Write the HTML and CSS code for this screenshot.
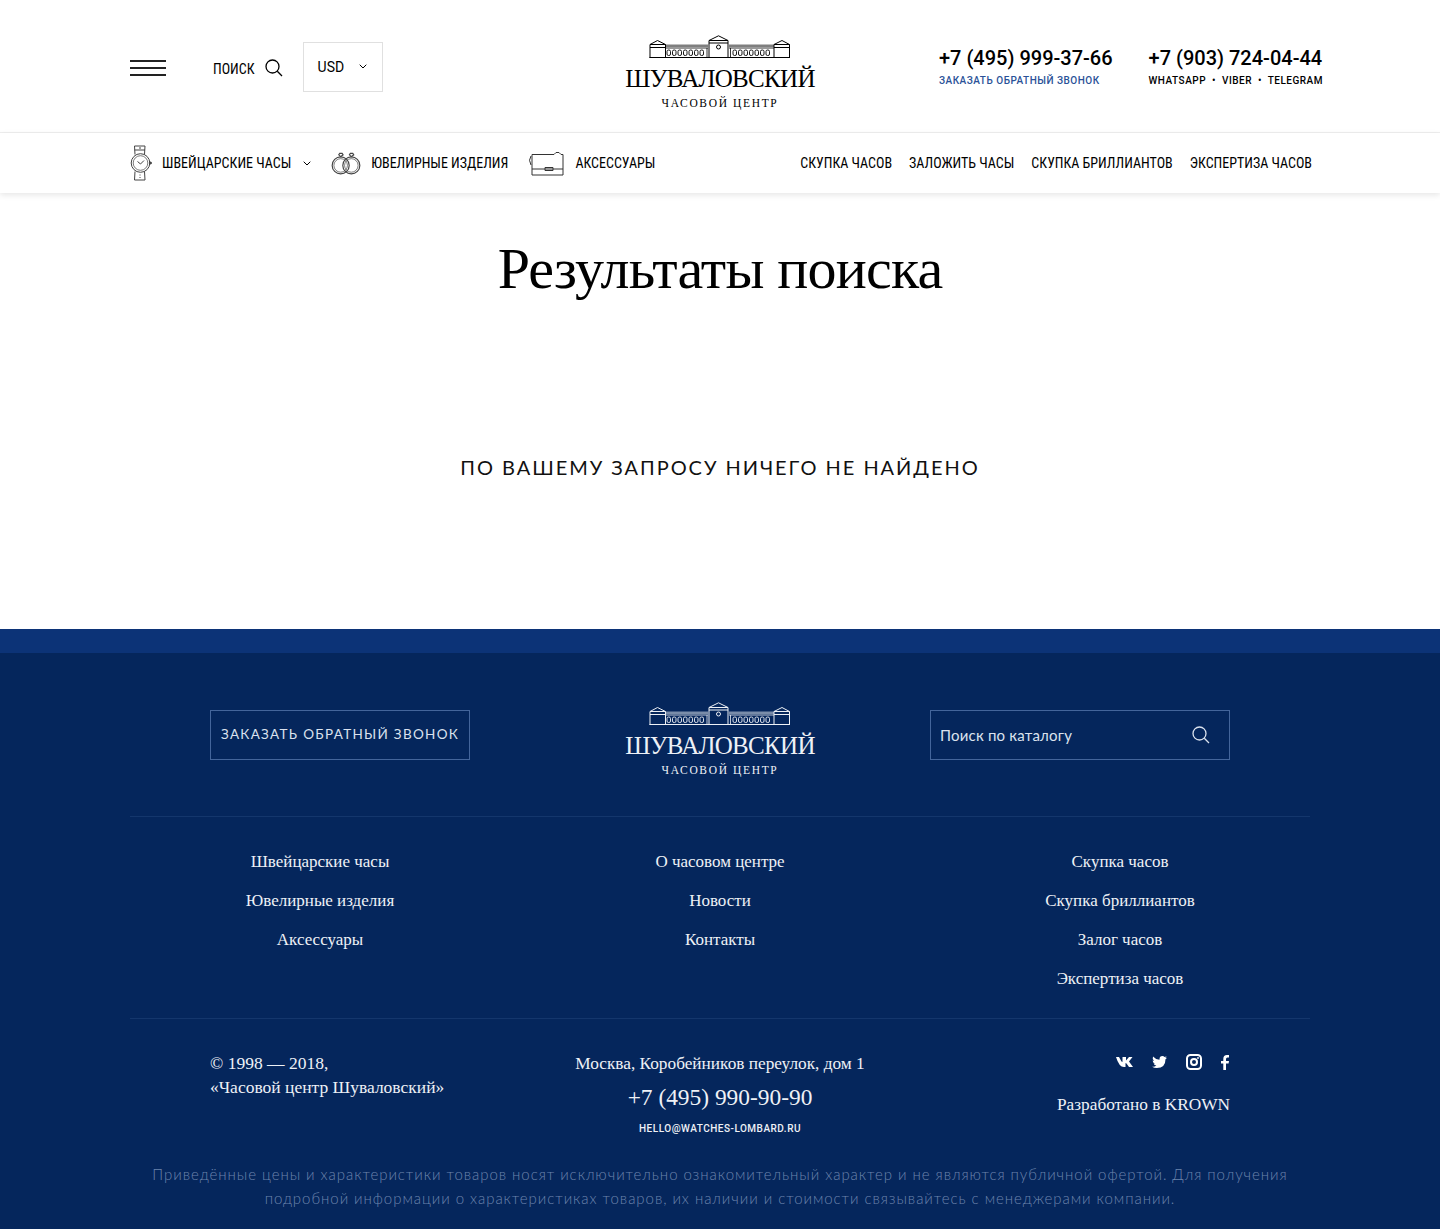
FILE: index.html
```html
<!DOCTYPE html>
<html lang="en">
<head>
    <meta charset="UTF-8">
    <title>Результаты поиска</title>
    <link rel="stylesheet" href="styles.css">
</head>
<body>
    <svg class="sprite" width="0" height="0">
        <symbol id="building" viewBox="0 0 142 24">
            <g fill="none" stroke="currentColor" stroke-width="1">
                <path d="M1 23V9.500L8.500 5.500 16.500 9.500V23M1 9.500H16.500M1 12.500H16.500"/>
                <path d="M60 23V5.500L69.500 .8 79 5.500V23M60 5.500H79M60 8H79"/>
                <path d="M125 23V9.500L133 5.500 140.500 9.500V23M125 9.500H140.500M125 12.500H140.500"/>
                <path d="M.5 22.500H141"/>
                <path d="M16.500 10.800H59M80 10.800H125" stroke-width="2.400" opacity=".5"/>
                <path d="M16.500 13H59M80 13H125" stroke-width=".8"/>
                <path d="M58 13V23M81.500 13V23" stroke-width=".8"/>
                <circle cx="69.500" cy="12" r="2"/>
                <g stroke-width=".9">
                    <rect x="18" y="15" width="3.500" height="5.500" rx="1.500"/><rect x="23.500" y="15" width="3.500" height="5.500" rx="1.500"/><rect x="29" y="15" width="3.500" height="5.500" rx="1.500"/><rect x="34.500" y="15" width="3.500" height="5.500" rx="1.500"/><rect x="40" y="15" width="3.500" height="5.500" rx="1.500"/><rect x="45.500" y="15" width="3.500" height="5.500" rx="1.500"/><rect x="51" y="15" width="3.500" height="5.500" rx="1.500"/>
                    <rect x="84" y="15" width="3.500" height="5.500" rx="1.500"/><rect x="89.500" y="15" width="3.500" height="5.500" rx="1.500"/><rect x="95" y="15" width="3.500" height="5.500" rx="1.500"/><rect x="100.500" y="15" width="3.500" height="5.500" rx="1.500"/><rect x="106" y="15" width="3.500" height="5.500" rx="1.500"/><rect x="111.500" y="15" width="3.500" height="5.500" rx="1.500"/><rect x="117" y="15" width="3.500" height="5.500" rx="1.500"/>
                </g>
            </g>
        </symbol>
        <symbol id="search" viewBox="0 0 18 18">
            <circle cx="7.500" cy="7.500" r="6.500" fill="none" stroke="currentColor" stroke-width="1.300"/>
            <path d="M12.300 12.300L17 17" fill="none" stroke="currentColor" stroke-width="1.300"/>
        </symbol>
        <symbol id="chevron" viewBox="0 0 8 5">
            <path d="M.7.7L4 4 7.300.7" fill="none" stroke="currentColor" stroke-width="1"/>
        </symbol>
    </svg>

    <header class="top">
        <div class="top-inner">
            <div class="top-left">
                <div class="burger"><span></span><span></span><span></span></div>
                <div class="search-link">
                    <span class="search-text">ПОИСК</span>
                    <svg class="search-icon"><use href="#search"/></svg>
                </div>
                <div class="currency">
                    <span>USD</span>
                    <svg class="chevron"><use href="#chevron"/></svg>
                </div>
            </div>
            <div class="logo">
                <svg class="logo-building"><use href="#building"/></svg>
                <div class="logo-name">ШУВАЛОВСКИЙ</div>
                <div class="logo-sub">ЧАСОВОЙ ЦЕНТР</div>
            </div>
            <div class="phones">
                <div class="phone">
                    <div class="phone-num">+7 (495) 999-37-66</div>
                    <div class="phone-note blue">ЗАКАЗАТЬ ОБРАТНЫЙ ЗВОНОК</div>
                </div>
                <div class="phone">
                    <div class="phone-num">+7 (903) 724-04-44</div>
                    <div class="phone-note">WHATSAPP &nbsp;•&nbsp; VIBER &nbsp;•&nbsp; TELEGRAM</div>
                </div>
            </div>
        </div>
    </header>

    <nav class="nav">
        <div class="nav-inner">
            <div class="nav-left">
                <a class="nav-item nav-watch">
                    <svg class="icon-watch" viewBox="0 0 22 36" fill="none" stroke="#444" stroke-width="1">
                        <path d="M5 9.500L4.500 1H15L14.500 9.500M5 26.500L4.500 35H15L14.500 26.500"/>
                        <path d="M4.600 5H15"/>
                        <circle cx="10.500" cy="18" r="9.300"/>
                        <circle cx="10.500" cy="18" r="7.300" stroke-width=".7"/>
                        <path d="M7.500 16.500L10.500 19 14 15.500"/>
                        <circle cx="20.500" cy="18" r="1" fill="#444"/>
                        <path d="M10 2V4M10 29.500V30.500M10 32V33"/>
                    </svg>
                    <span>ШВЕЙЦАРСКИЕ ЧАСЫ</span>
                    <svg class="chevron nav-chevron"><use href="#chevron"/></svg>
                </a>
                <a class="nav-item nav-rings">
                    <svg class="icon-rings" viewBox="0 0 31 23" fill="none" stroke="#444" stroke-width="1.200">
                        <circle cx="10" cy="13.500" r="8.800"/>
                        <circle cx="10" cy="13.500" r="7" stroke-width=".7"/>
                        <circle cx="21" cy="13.500" r="8.800"/>
                        <circle cx="21" cy="13.500" r="7" stroke-width=".7"/>
                        <path d="M8 2.500L9 1H11.500L12.500 2.500 10 4.500ZM19 2.500L20 1H22.500L23.500 2.500 21 4.500Z"/>
                    </svg>
                    <span>ЮВЕЛИРНЫЕ ИЗДЕЛИЯ</span>
                </a>
                <a class="nav-item nav-bag">
                    <svg class="icon-bag" viewBox="0 0 36 25" fill="none" stroke="#333" stroke-width="1">
                        <path d="M4 3.500H26L28 1.500H31L33 3.500H35V24H4Z"/>
                        <path d="M4 18H35M3 5Q0 9 3 14M17 16.500H25V19.500H17Z"/>
                    </svg>
                    <span>АКСЕССУАРЫ</span>
                </a>
            </div>
            <div class="nav-right">
                <a>СКУПКА ЧАСОВ</a>
                <a>ЗАЛОЖИТЬ ЧАСЫ</a>
                <a>СКУПКА БРИЛЛИАНТОВ</a>
                <a>ЭКСПЕРТИЗА ЧАСОВ</a>
            </div>
        </div>
    </nav>

    <main class="content">
        <h1>Результаты поиска</h1>
        <p class="empty">ПО ВАШЕМУ ЗАПРОСУ НИЧЕГО НЕ НАЙДЕНО</p>
    </main>

    <div class="band"></div>
    <footer class="footer">
        <div class="footer-inner">
            <div class="footer-top">
                <a class="callback">ЗАКАЗАТЬ ОБРАТНЫЙ ЗВОНОК</a>
                <div class="logo logo-light">
                    <svg class="logo-building"><use href="#building"/></svg>
                    <div class="logo-name">ШУВАЛОВСКИЙ</div>
                    <div class="logo-sub">ЧАСОВОЙ ЦЕНТР</div>
                </div>
                <div class="catalog-search">
                    <span>Поиск по каталогу</span>
                    <svg class="search-icon"><use href="#search"/></svg>
                </div>
            </div>
            <div class="footer-links">
                <div class="link-cols">
                    <ul>
                        <li>Швейцарские часы</li>
                        <li>Ювелирные изделия</li>
                        <li>Аксессуары</li>
                    </ul>
                    <ul>
                        <li>О часовом центре</li>
                        <li>Новости</li>
                        <li>Контакты</li>
                    </ul>
                    <ul>
                        <li>Скупка часов</li>
                        <li>Скупка бриллиантов</li>
                        <li>Залог часов</li>
                        <li>Экспертиза часов</li>
                    </ul>
                </div>
            </div>
            <div class="footer-bottom">
                <div class="copy">© 1998 — 2018,<br>«Часовой центр Шуваловский»</div>
                <div class="contacts">
                    <div class="address">Москва, Коробейников переулок, дом 1</div>
                    <div class="footer-phone">+7 (495) 990-90-90</div>
                    <div class="mail">HELLO@WATCHES-LOMBARD.RU</div>
                </div>
                <div class="social-col">
                    <div class="social">
                        <svg class="soc-vk" viewBox="0 0 17 10" fill="#fff"><path d="M0 0H3L5.500 4.500 6.500 5V0H10V3.500L13 0H16.500L13 4.500 17 10H13L10.500 6.500 9.500 6V10H8Q3 10 0 0Z"/></svg>
                        <svg class="soc-tw" viewBox="0 0 15 12" fill="#fff"><path d="M15 1.500Q14 2 13.200 2.100 14.200 1.500 14.500.3 13.500.9 12.600 1 11.700 0 10.400 0 7.600 0 7.500 3.200V3.700Q3.500 3.500 1 .5 0 3 2 4.800 1.200 4.800.6 4.400.7 6.800 3 7.400 2.300 7.600 1.600 7.500 2.300 9.300 4.400 9.500 2.500 11 0 10.700 2.200 12 4.800 12 13.500 12 13.500 3.300 14.500 2.600 15 1.500Z"/></svg>
                        <svg class="soc-ig" viewBox="0 0 16 16" fill="none" stroke="#fff" stroke-width="2"><rect x="1" y="1" width="14" height="14" rx="3.500"/><circle cx="8" cy="8" r="3"/><circle cx="12" cy="4" r=".6" stroke-width="1"/></svg>
                        <svg class="soc-fb" viewBox="0 0 8 15" fill="#fff"><path d="M2.300 15V8.500H0V6H2.300V4Q2.300 0 6 0H8V2.500H6.500Q5 2.500 5 4V6H8L7.600 8.500H5V15Z"/></svg>
                    </div>
                    <div class="krown">Разработано в KROWN</div>
                </div>
            </div>
            <p class="disclaimer">Приведённые цены и характеристики товаров носят исключительно ознакомительный характер и не являются публичной офертой. Для получения подробной информации о характеристиках товаров, их наличии и стоимости связывайтесь с менеджерами компании.</p>
        </div>
    </footer>
</body>
</html>
```

FILE: styles.css
```css
* {
    box-sizing: border-box;
}

body {
    margin: 0;
    font-family: Roboto, sans-serif;
    color: #000;
    background-color: #fff;
}

.sprite {
    position: absolute;
}

ul {
    list-style: none;
    margin: 0;
    padding: 0;
}

/* header */
.top {
    height: 133px;
    border-bottom: 1px solid #efefef;
}

.top-inner {
    width: 1180px;
    height: 132px;
    margin: 0 auto;
    display: grid;
    grid-template-columns: 1fr 192px 1fr;
    align-items: center;
}

.top-left {
    display: flex;
    align-items: center;
    padding-top: 3px;
}

.burger {
    width: 36px;
    display: flex;
    flex-direction: column;
    gap: 5px;
    margin-right: 47px;
}

.burger span {
    height: 2px;
    background-color: #222;
}

.search-link {
    display: flex;
    align-items: center;
    gap: 10px;
    margin-right: 20px;
    font-size: 14px;
    font-stretch: 75%;
    white-space: nowrap;
}

.search-text {
    margin-top: 3px;
}

.search-icon {
    width: 18px;
    height: 18px;
}

.currency {
    width: 80px;
    height: 50px;
    margin-top: -2px;
    border: 1px solid #e0e0e0;
    padding: 0 15px 0 14px;
    display: flex;
    align-items: center;
    justify-content: space-between;
    font-size: 14px;
}

.chevron {
    width: 8px;
    height: 5px;
}

.logo {
    display: flex;
    flex-direction: column;
    align-items: center;
}

.top .logo {
    align-self: start;
    padding-top: 35px;
}

.logo-building {
    width: 142px;
    height: 24px;
}

.logo-name {
    font-family: "Liberation Serif", serif;
    font-size: 25px;
    letter-spacing: -.7px;
    line-height: 32px;
    margin-top: 4px;
    white-space: nowrap;
}

.logo-sub {
    font-family: "Liberation Serif", serif;
    font-size: 11.500px;
    letter-spacing: 1.650px;
    line-height: 14px;
    margin-top: 1px;
}

.phones {
    display: flex;
    justify-content: flex-end;
    gap: 36px;
    margin-right: -13px;
    padding-top: 2px;
}

.phone-num {
    font-size: 20px;
    font-weight: 500;
    line-height: 24px;
    white-space: nowrap;
}

.phone-note {
    font-size: 10px;
    font-weight: 500;
    letter-spacing: .5px;
    line-height: 14px;
    margin-top: 4px;
    white-space: nowrap;
}

.phone-note.blue {
    color: #2a5298;
}

/* nav */
.nav {
    height: 60px;
    box-shadow: 0 2px 6px rgba(0, 0, 0, .1);
}

.nav-inner {
    width: 1180px;
    height: 60px;
    margin: 0 auto;
    display: flex;
    justify-content: space-between;
    align-items: center;
    font-size: 14px;
    font-stretch: 75%;
    white-space: nowrap;
}

.nav-left {
    display: flex;
    align-items: center;
}

.nav-item {
    display: flex;
    align-items: center;
}

.icon-watch {
    width: 22px;
    height: 36px;
    margin-right: 10px;
}

.nav-chevron {
    margin: 0 20px 0 12px;
}

.icon-rings {
    width: 30px;
    height: 23px;
    margin-right: 10px;
}

.nav-rings {
    margin-right: 20px;
}

.icon-bag {
    width: 36px;
    height: 25px;
    margin-right: 11px;
}

.nav-right {
    display: flex;
    gap: 17px;
    margin-right: -2px;
}

/* content */
.content {
    height: 436px;
    text-align: center;
}

h1 {
    margin: 0;
    padding-top: 36px;
    font-family: "Liberation Serif", serif;
    font-size: 58px;
    font-weight: 400;
    letter-spacing: -.8px;
    line-height: 80px;
}

.empty {
    margin: 0;
    padding-top: 146px;
    font-family: Lato, sans-serif;
    font-size: 20px;
    letter-spacing: 1.950px;
    line-height: 24px;
    color: #111;
}

/* footer */
.band {
    height: 24px;
    background-color: #0c3377;
}

.footer {
    height: 576px;
    background-color: #05265c;
    color: #eef1f6;
    font-family: "Liberation Serif", serif;
}

.footer-inner {
    width: 1180px;
    margin: 0 auto;
}

.footer-top {
    height: 164px;
    padding: 49px 80px 0;
    display: grid;
    grid-template-columns: 300px 1fr 300px;
    align-items: start;
    border-bottom: 1px solid #14366c;
}

.callback {
    width: 260px;
    height: 50px;
    margin-top: 8px;
    padding-bottom: 3px;
    border: 1px solid #44659b;
    display: flex;
    align-items: center;
    justify-content: center;
    font-family: Lato, sans-serif;
    font-size: 13.500px;
    letter-spacing: 1.300px;
    white-space: nowrap;
    color: #dbe2ee;
}

.catalog-search {
    height: 50px;
    margin-top: 8px;
    border: 1px solid #44659b;
    padding: 0 19px 0 9px;
    display: flex;
    align-items: center;
    justify-content: space-between;
    font-family: Lato, sans-serif;
    font-size: 15px;
    letter-spacing: .2px;
    color: #dbe2ee;
}

.footer-links {
    height: 202px;
    padding-top: 25px;
    border-bottom: 1px solid #14366c;
    font-size: 17px;
    line-height: 39px;
}

.link-cols {
    margin: 0 -10px;
    display: grid;
    grid-template-columns: repeat(3, 1fr);
    text-align: center;
}

.footer-bottom {
    padding: 33px 80px 0;
    display: grid;
    grid-template-columns: 1fr 1fr 1fr;
    font-size: 17.300px;
}

.copy {
    margin-top: -1px;
    font-size: 17.500px;
    line-height: 24px;
    white-space: nowrap;
}

.contacts {
    text-align: center;
    white-space: nowrap;
}

.address {
    line-height: 24px;
}

.footer-phone {
    font-size: 23.400px;
    line-height: 30px;
    margin-top: 6px;
}

.mail {
    font-family: Roboto, sans-serif;
    font-size: 10px;
    font-weight: 500;
    letter-spacing: .5px;
    line-height: 14px;
    margin-top: 10px;
}

.social-col {
    text-align: right;
}

.social {
    height: 18px;
    padding-right: 1px;
    display: flex;
    justify-content: flex-end;
    align-items: center;
    gap: 19px;
    margin-top: 1px;
}

.soc-vk {
    width: 17px;
    height: 10px;
}

.soc-tw {
    width: 15px;
    height: 12px;
}

.soc-ig {
    width: 16px;
    height: 16px;
}

.soc-fb {
    width: 8px;
    height: 15px;
}

.krown {
    margin-top: 22px;
    line-height: 24px;
    white-space: nowrap;
}

.disclaimer {
    margin: 26px 0 0;
    text-align: center;
    font-family: Lato, sans-serif;
    font-size: 15px;
    font-weight: 300;
    letter-spacing: .95px;
    line-height: 24px;
    color: #6c84ac;
}
```
